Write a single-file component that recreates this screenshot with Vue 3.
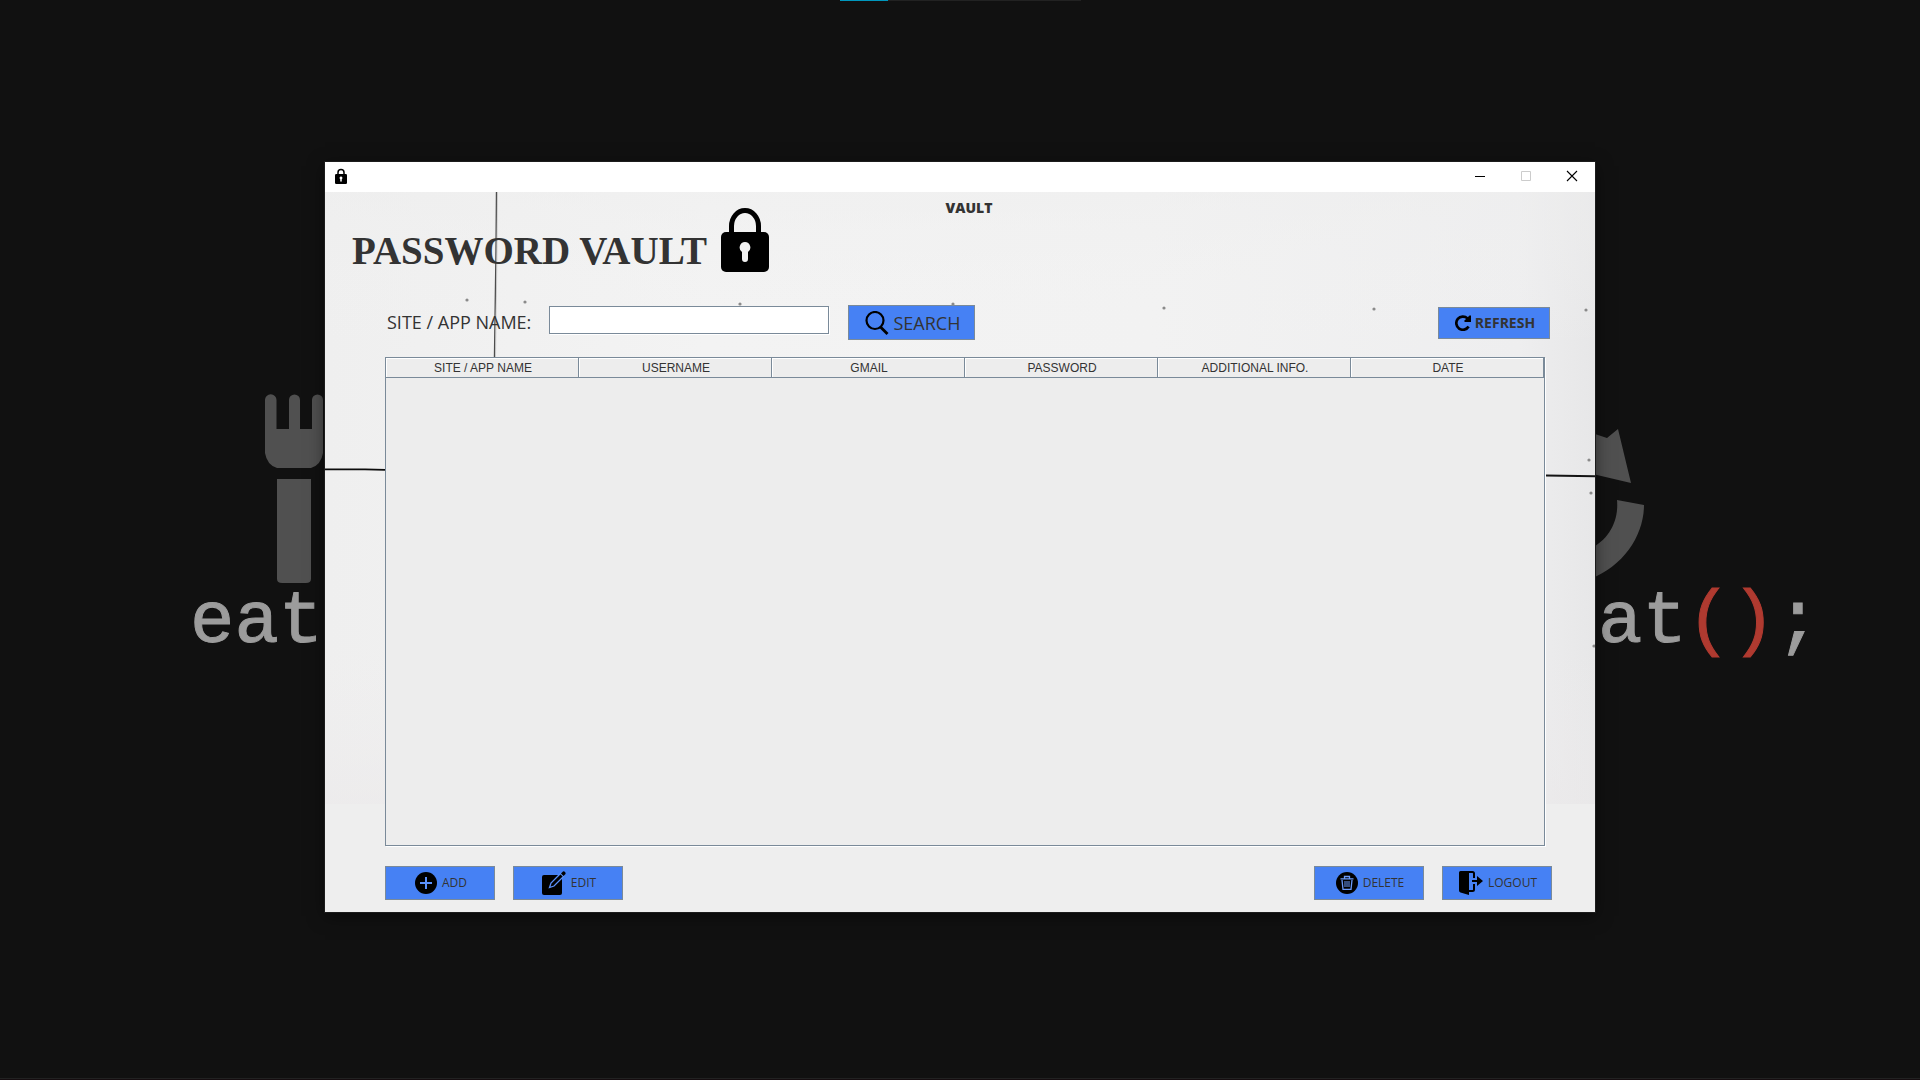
<script setup>
import { ref } from 'vue'

const query = ref('')
const columns = ['SITE / APP NAME', 'USERNAME', 'GMAIL', 'PASSWORD', 'ADDITIONAL INFO.', 'DATE']
const specks = [
  [142, 108], [200, 110], [415, 112], [628, 112], [839, 116],
  [1049, 117], [1261, 118], [1264, 268], [1266, 301], [1269, 454],
]
</script>

<template>
  <div class="desktop">
    <svg class="wallpaper" viewBox="0 0 1920 1080" preserveAspectRatio="xMidYMid slice">
      <g fill="#505050">
        <path d="M265 400a5.500 5.500 0 0 1 11.500 0V429H289V400a5.500 5.500 0 0 1 11 0V429H312V400a5.500 5.500 0 0 1 11 0V453Q321 465 311 468H277Q267 465 265 453Z" />
        <path d="M277 479H311V579Q311 583 306 583H282Q277 583 277 579Z" />
        <path d="M1580 425 1595 434 1607 438 1618 429 1631 483 1580 471Z" />
        <path d="M1617 500 1644 505C1644 535 1624 566 1590 579V549C1608 540 1619 522 1617 500Z" />
      </g>
      <g class="code">
        <text x="190" y="642">eat</text>
        <text x="1598" y="642">at<tspan class="paren">()</tspan>;</text>
      </g>
    </svg>
    <div class="loader"><div class="loader-bar"></div></div>
    <div class="taskbar-edge"></div>

    <main class="window">
      <header class="titlebar">
        <svg class="lock-small" viewBox="0 0 48 64">
          <path d="M12 26V18a12 12 0 0 1 24 0V26" fill="none" stroke="#000" stroke-width="6" />
          <rect y="24" width="48" height="40" rx="5" />
          <path d="M24 34a6 6 0 0 1 3 11V52a3 3 0 0 1-6 0V45a6 6 0 0 1 3-11Z" fill="#fff" />
        </svg>
        <div class="controls">
          <button type="button" aria-label="Minimize">
            <svg viewBox="0 0 12 12"><path d="M1 6.500H11" stroke="#000" /></svg>
          </button>
          <button type="button" aria-label="Maximize" disabled>
            <svg viewBox="0 0 12 12"><path d="M1.500 1.500H10.500V10.500H1.500Z" fill="none" stroke="#ccc" /></svg>
          </button>
          <button type="button" aria-label="Close">
            <svg viewBox="0 0 12 12"><path d="M1 1 11 11M11 1 1 11" stroke="#000" stroke-width="1.100" /></svg>
          </button>
        </div>
      </header>

      <section class="panel">
        <svg class="wall" viewBox="0 0 1270 612" preserveAspectRatio="none">
          <defs>
            <linearGradient id="plaster">
              <stop offset="0" stop-color="#efefef" />
              <stop offset="0.300" stop-color="#f3f3f3" />
              <stop offset="0.650" stop-color="#f2f2f2" />
              <stop offset="0.940" stop-color="#eeeeef" />
              <stop offset="1" stop-color="#e7e7e8" />
            </linearGradient>
            <linearGradient id="fade" x2="0" y2="1">
              <stop offset="0" stop-color="#eeeeee" stop-opacity="0.500" />
              <stop offset="0.250" stop-color="#f3f3f3" stop-opacity="0" />
              <stop offset="0.750" stop-color="#eeeced" stop-opacity="0" />
              <stop offset="1" stop-color="#ebe9ea" stop-opacity="0.600" />
            </linearGradient>
          </defs>
          <rect width="1270" height="612" fill="url(#plaster)" />
          <rect width="1270" height="612" fill="url(#fade)" />
          <path d="M171.500 0 171 60 169.500 165" fill="none" stroke="#4c4c4c" stroke-width="1.400" />
          <path d="M172.500 0 172 60 170.500 165" fill="none" stroke="#c8c8c8" stroke-width="0.800" />
          <path d="M0 277.300H40L60 277.800" fill="none" stroke="#0c0c0c" stroke-width="1.800" />
          <path d="M1221 283.500 1270 284.300" fill="none" stroke="#141414" stroke-width="1.900" />
          <circle v-for="([x, y], i) in specks" :key="i" :cx="x" :cy="y" r="1.600" fill="#8a8a8a" />
        </svg>

        <div class="content">
          <div class="heading">
            <div class="brand">
              <h1>PASSWORD VAULT</h1>
              <svg class="lock" viewBox="0 0 48 64">
                <path d="M10.500 26V18a13.500 15.500 0 0 1 27 0V26" fill="none" stroke="#000" stroke-width="5" />
                <rect y="24" width="48" height="40" rx="5" />
                <path d="M24 34a5.500 5.500 0 0 1 3 10V51a3 3 0 0 1-6 0V44a5.500 5.500 0 0 1 3-10Z" fill="#f3f3f3" />
              </svg>
            </div>
            <h2>VAULT</h2>
          </div>

          <form class="search" @submit.prevent>
            <label for="site">SITE / APP NAME:</label>
            <input id="site" v-model="query" type="text" />
            <button class="btn find" type="submit">
              <svg width="24" height="24" viewBox="0 0 24 24" fill="none" stroke="#000">
                <circle cx="10" cy="9.500" r="8.500" stroke-width="2.200" />
                <path d="M15.500 16 22.500 23" stroke-width="2.800" />
              </svg>
              SEARCH
            </button>
            <button class="btn refresh" type="button">
              <svg width="16" height="16" viewBox="0 0 16 16">
                <path d="M13.600 11.500A6.600 6.600 0 1 1 12.500 3.400" fill="none" stroke="#000" stroke-width="2.700" />
                <path d="M16 .6V7H9.500V5.500L14.500.6Z" />
              </svg>
              REFRESH
            </button>
          </form>

          <div class="grid">
            <table>
              <thead>
                <tr><th v-for="name in columns" :key="name" scope="col">{{ name }}</th></tr>
              </thead>
            </table>
          </div>

          <div class="actions">
            <button class="btn" type="button">
              <svg width="22" height="22" viewBox="0 0 22 22">
                <circle cx="11" cy="11" r="11" />
                <path d="M11 5V17M5 11H17" stroke="#5b91fa" stroke-width="2" />
              </svg>
              ADD
            </button>
            <button class="btn" type="button">
              <svg width="24" height="24" viewBox="0 0 24 24">
                <rect y="4" width="20" height="20" rx="2" />
                <path d="M7.500 16.500 9 12 18.500 2.500 21.500 5.500 12 15Z" fill="#000" stroke="#5b91fa" stroke-width="1.300" />
                <path d="M19 2.500 21 .5Q22 0 23 1T23.500 3L21.500 5Z" />
              </svg>
              EDIT
            </button>
            <button class="btn delete" type="button">
              <svg width="22" height="22" viewBox="0 0 22 22">
                <circle cx="11" cy="11" r="11" />
                <g fill="none" stroke="#6b9bfa" stroke-width="1.300">
                  <path d="M4.500 6.800H17.500M8.500 6.500V4.500H13.500V6.500M6 8 7 17.300H15L16 8" />
                  <path d="M9 9V15M11 9V15M13 9V15" stroke-width="1" />
                </g>
              </svg>
              DELETE
            </button>
            <button class="btn" type="button">
              <svg width="24" height="24" viewBox="0 0 24 24">
                <path d="M1.500 0H12L10 2V24L1.500 21.500Q0 21 0 19.500V1.500Q0 0 1.500 0Z" />
                <path d="M10 1H13.500Q15 1 15 2.500V7M15 13V18.500Q15 20 13.500 20H10" fill="none" stroke="#000" stroke-width="2" />
                <path d="M13 9H18V5L24 10 18 15V11H13Z" />
              </svg>
              LOGOUT
            </button>
          </div>
        </div>
      </section>
    </main>
  </div>
</template>

<style>
body {
  margin: 0;
  background: #111;
}
</style>

<style scoped>
* {
  box-sizing: border-box;
}

.desktop {
  position: relative;
  display: flex;
  align-items: center;
  justify-content: center;
  min-height: 100vh;
  padding-bottom: 6px;
  overflow: hidden;
  background: #111;
  font-family: "Open Sans", "Noto Sans", sans-serif;
  color: #333;
}

.wallpaper {
  position: absolute;
  inset: 0;
  width: 100%;
  height: 100%;
}

.code {
  font-family: "Liberation Mono", monospace;
  font-size: 74px;
  fill: #9c9c9c;
  stroke: #9c9c9c;
}

.paren {
  fill: #b03a30;
  stroke: #b03a30;
}

.loader {
  position: absolute;
  top: 0;
  left: 50%;
  width: 241px;
  height: 1px;
  margin-left: -120px;
  background: #222;
}

.loader-bar {
  width: 20%;
  height: 1px;
  background: #0097bd;
}

.taskbar-edge {
  position: absolute;
  right: 0;
  bottom: 0;
  left: 0;
  height: 2px;
  border-top: 1px solid #222;
  background: #150d10;
}

.window {
  position: relative;
  width: 100%;
  max-width: 1270px;
  box-shadow: 0 0 0 1px #1c1c1c, 0 4px 16px rgba(0, 0, 0, 0.5);
}

.titlebar {
  display: flex;
  align-items: center;
  justify-content: space-between;
  height: 30px;
  padding: 0 0 2px 10px;
  background: #fff;
}

.lock-small {
  width: 12px;
  height: 16px;
}

.controls {
  display: flex;
}

.controls button {
  display: flex;
  align-items: center;
  justify-content: center;
  width: 46px;
  height: 28px;
  padding: 0;
  border: 0;
  background: none;
}

.controls svg {
  width: 12px;
  height: 12px;
}

.panel {
  position: relative;
  background: #eee;
}

.wall {
  position: absolute;
  top: 0;
  left: 0;
  width: 100%;
  height: 85%;
}

.content {
  position: relative;
  padding-bottom: 12px;
}

.heading {
  display: grid;
}

.brand,
h2 {
  grid-area: 1 / 1;
}

.brand {
  display: flex;
  align-items: flex-end;
  gap: 14px;
  padding: 16px 0 0 27px;
}

h1 {
  margin: 0;
  font: bold 39px/42px "Liberation Serif", serif;
}

.lock {
  width: 48px;
  height: 64px;
}

h2 {
  margin: 0;
  padding: 6px 0 0 18px;
  font-size: 14px;
  font-weight: 800;
  line-height: 20px;
  text-align: center;
}

.search {
  display: flex;
  align-items: center;
  height: 35px;
  margin: 33px 45px 0 62px;
}

label {
  width: 162px;
  padding-bottom: 2px;
  font-size: 18px;
  line-height: 24px;
}

input {
  width: 280px;
  height: 28px;
  margin: 0 19px 6px 0;
  padding: 0 4px;
  border: 1px solid #7a8a99;
  border-radius: 0;
  background: #fff;
  box-shadow: 1px 1px 0 #fff;
  font: inherit;
  outline: 0;
}

.btn {
  display: flex;
  align-items: center;
  justify-content: center;
  gap: 5px;
  width: 110px;
  height: 34px;
  padding: 0 0 0 2px;
  border: 1px solid #7a8a99;
  border-radius: 0;
  background: #4681f4;
  color: #333;
  font-family: inherit;
  font-size: 12px;
  line-height: 18px;
}

.find {
  width: 127px;
  height: 35px;
  font-size: 18px;
}

.refresh {
  gap: 4px;
  width: 112px;
  height: 32px;
  margin-left: auto;
  font-size: 14px;
  font-weight: 700;
}

.grid {
  min-height: 489px;
  margin: 17px 50px 0 60px;
  border: 1px solid #7a8a99;
  background: #ededed;
  box-shadow: 1px 1px 0 #fff;
}

table {
  width: 100%;
  border-spacing: 0;
  table-layout: fixed;
}

th {
  height: 20px;
  padding: 1px 0 0 2px;
  border: solid #7a8a99;
  border-width: 0 1px 1px 0;
  box-shadow: inset 1px 1px 0 #fff;
  font: 12px/18px "Liberation Sans", Arial, sans-serif;
  text-align: center;
}

.actions {
  display: flex;
  gap: 18px;
  margin: 20px 43px 0 60px;
}

.delete {
  margin-left: auto;
}
</style>
